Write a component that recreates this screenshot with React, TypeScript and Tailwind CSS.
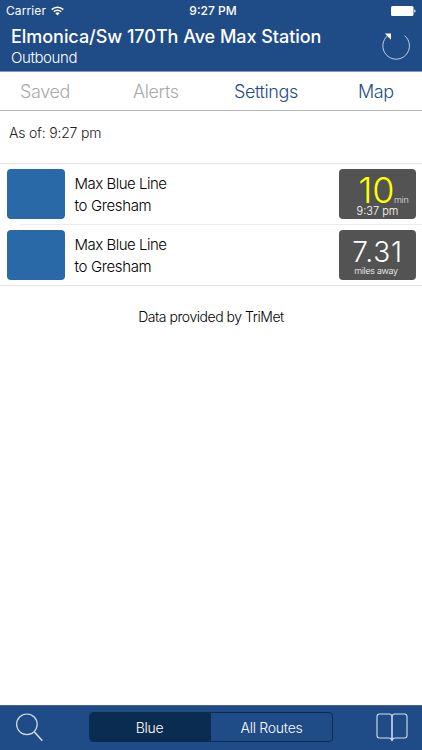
import React from "react";

type Arrival = {
  id: number;
  route: string;
  destination: string;
  minutes?: number;
  time?: string;
  miles?: string;
};

const arrivals: Arrival[] = [
  {
    id: 1,
    route: "Max Blue Line",
    destination: "to Gresham",
    minutes: 10,
    time: "9:37 pm",
  },
  { id: 2, route: "Max Blue Line", destination: "to Gresham", miles: "7.31" },
];

const WifiIcon = () => (
  <svg width="13" height="10" viewBox="0 0 13 10" fill="none" stroke="white">
    <path d="M0.7 3.6a8.3 8.3 0 0 1 11.6 0" strokeWidth="1.5" />
    <path d="M2.8 5.8a5.3 5.3 0 0 1 7.4 0" strokeWidth="1.5" />
    <path d="M6.5 9.4 4.4 7.3a3 3 0 0 1 4.2 0z" fill="white" stroke="none" />
  </svg>
);

const BatteryIcon = () => (
  <svg width="25" height="10" viewBox="0 0 25 10" fill="white">
    <rect width="22.5" height="10" rx="1.6" />
    <path d="M23.3 3.3c1.7.5 1.7 2.9 0 3.4z" />
  </svg>
);

const RefreshIcon = () => (
  <svg width="30" height="30" viewBox="0 0 30 30" fill="none">
    <path
      d="M23.6 4.6A13.3 13.3 0 1 1 7.2 4.2"
      stroke="#c3d3e8"
      strokeWidth="1"
    />
    <path d="M3.8 2.4H10v6.4z" fill="white" />
  </svg>
);

const SearchIcon = () => (
  <svg width="28" height="30" viewBox="0 0 28 30" fill="none" stroke="#d3e2f3">
    <circle cx="10.9" cy="11.3" r="10.3" strokeWidth="1.2" />
    <path d="M18.2 18.8 26.3 27.8" strokeWidth="1.5" />
  </svg>
);

const BookIcon = () => (
  <svg width="32" height="30" viewBox="0 0 32 30" fill="none" stroke="#d3e2f3">
    <path
      d="M16 3.2C15.7 1.7 14.7 1 13 1H3.5Q1 1 1 3.5V22.5Q1 25 3.5 25H13C14.7 25 15.6 25.6 16 27.5C16.4 25.6 17.3 25 19 25H28.5Q31 25 31 22.5V3.5Q31 1 28.5 1H19C17.3 1 16.3 1.7 16 3.2z"
      strokeWidth="1.1"
    />
    <path d="M16 3v24" strokeWidth="1.5" />
    <path d="M14.3 25.8h3.4L16 28.6z" fill="#d3e2f3" stroke="none" />
  </svg>
);

const ArrivalBadge = ({ arrival }: { arrival: Arrival }) => (
  <div className="flex h-[50px] w-[77px] flex-col items-center rounded-[4px] bg-[#535353] text-white">
    {arrival.minutes !== undefined ? (
      <>
        <div className="flex items-baseline pt-[8px] pl-[12px]">
          <span className="text-[36px] leading-[26px] font-light tracking-[-0.4px] text-[#ffff00]">
            {arrival.minutes}
          </span>
          <span className="text-[9px] leading-[10px] font-light tracking-[-0.2px] text-[#e0e0e0]">
            min
          </span>
        </div>
        <span className="pt-px text-[11px] leading-[11px] font-light">
          {arrival.time}
        </span>
      </>
    ) : (
      <>
        <span className="pt-[9px] text-[28px] leading-[26px] font-light tracking-[0.8px]">
          {arrival.miles}
        </span>
        <span className="pr-[3px] text-[9px] leading-[11px] font-light tracking-[-0.3px]">
          miles away
        </span>
      </>
    )}
  </div>
);

const App = () => {
  return (
    <div className="flex h-[750px] w-[422px] flex-col overflow-hidden bg-white font-['Inter','Liberation_Sans',sans-serif] text-black">
      <header className="flex h-[72px] shrink-0 flex-col border-b border-[#8499b7] bg-[#1f4b87] text-white">
        <div className="grid h-[22px] grid-cols-3 items-center px-[6px] text-[12px] leading-[22px]">
          <div className="flex items-center gap-[5px] tracking-[0.1px]">
            <span>Carrier</span>
            <WifiIcon />
          </div>
          <span className="pl-[4px] text-center font-medium">9:27 PM</span>
          <div className="flex justify-end">
            <BatteryIcon />
          </div>
        </div>
        <div className="flex justify-between pr-[11px] pl-[11px]">
          <div className="flex flex-col whitespace-nowrap">
            <h1 className="h-[26px] text-[18px] leading-[30px] font-medium tracking-[-0.04px]">
              Elmonica/Sw 170Th Ave Max Station
            </h1>
            <p className="text-[15px] leading-[19px] font-light tracking-[-0.4px]">
              Outbound
            </p>
          </div>
          <div className="pt-[9px]">
            <RefreshIcon />
          </div>
        </div>
      </header>

      <nav className="flex h-[39px] shrink-0 items-center border-b border-[#b9b9b9] pl-[20px] text-[18px] font-light tracking-[-0.4px]">
        <span className="w-[113px] text-[#aaaaaa]">Saved</span>
        <span className="w-[101px] text-[#aaaaaa]">Alerts</span>
        <span className="w-[124px] text-[#1f4b87]">Settings</span>
        <span className="text-[#1f4b87]">Map</span>
      </nav>

      <p className="h-[52px] shrink-0 pl-[9px] text-[14px] leading-[44px] font-light tracking-[-0.2px] text-[#222222]">
        As of: 9:27 pm
      </p>

      <ul className="shrink-0 border-y border-[#e4e4e4]">
        {arrivals.map((arrival, i) => (
          <li key={arrival.id}>
            {i > 0 && <div className="ml-[20px] h-px bg-[#ececec]" />}
            <div className="flex h-[60px] items-center pr-[6px] pl-[7px]">
              <div className="h-[50px] w-[58px] rounded-[4px] bg-[#2a69a7]" />
              <div className="flex-1 pt-[2px] pl-[9.5px] text-[15px] leading-[22px] font-light tracking-[-0.5px]">
                <p>{arrival.route}</p>
                <p className="tracking-[-0.35px]">{arrival.destination}</p>
              </div>
              <ArrivalBadge arrival={arrival} />
            </div>
          </li>
        ))}
      </ul>

      <p className="pt-[20px] text-center text-[14px] leading-[21px] font-light tracking-[-0.46px]">
        Data provided by TriMet
      </p>

      <footer className="mt-auto flex h-[45px] shrink-0 items-center border-t border-[#45658f] bg-[#1f4b87] pl-[16px] text-white">
        <SearchIcon />
        <div className="mr-[43px] mb-[2px] ml-[45px] flex h-[30px] w-[244px] overflow-hidden rounded-[4px] border border-[#0b2c51] text-[14px] leading-[29px] font-light tracking-[-0.25px]">
          <span className="w-[121px] bg-[#0b2c51] pr-[2px] text-center">
            Blue
          </span>
          <span className="flex-1 text-center">All Routes</span>
        </div>
        <BookIcon />
      </footer>
    </div>
  );
};

export default App;
